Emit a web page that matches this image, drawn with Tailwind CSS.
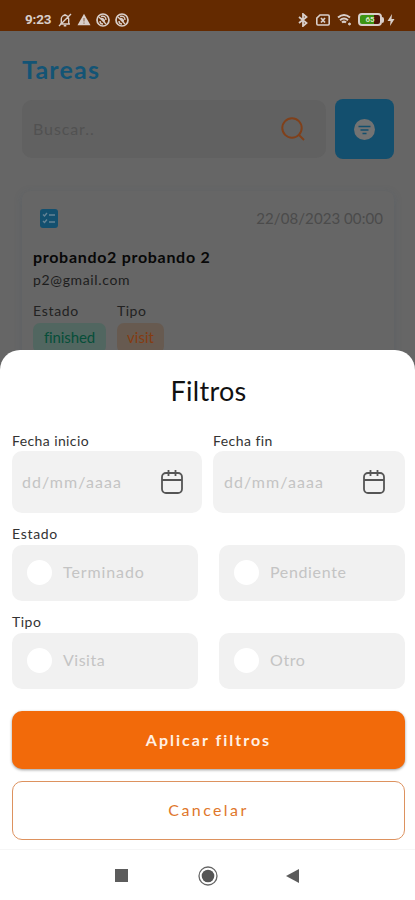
<!DOCTYPE html>
<html lang="es">
<head>
<meta charset="utf-8">
<title>Tareas</title>
<script src="https://cdn.jsdelivr.net/npm/@tailwindcss/browser@4"></script>
</head>
<body class="bg-white">
<div class="relative flex h-[900px] w-[415px] flex-col overflow-hidden bg-[#666] font-['Lato','Noto_Sans',sans-serif] whitespace-nowrap">

  <header class="flex h-[31px] shrink-0 items-center bg-[#642a00] pt-[8px] pr-[20px] pl-[25px] text-[#d9cfca]">
    <span class="w-[33px] font-[Roboto,sans-serif] text-[13.5px] font-bold tracking-[-0.2px]">9:23</span>
    <svg class="h-[14px] w-[14px]" viewBox="0 0 14 14" fill="none" stroke="currentColor" stroke-width="1.4"><path d="M2 11h10M3.3 10.5V6a3.7 3.7 0 0 1 7.4 0v4.5M7 1v1.5M5.7 12.7h2.6M1 13 13 1"/></svg>
    <svg class="ml-[5px] h-[13px] w-[14px]" viewBox="0 0 14 13"><path fill="currentColor" d="M7 .8 13.5 12.3H.5z"/><path stroke="#8f6a50" stroke-width="1.1" d="M7 5v3.5M7 9.5v1.2"/></svg>
    <svg class="ml-[5px] h-[14px] w-[14px]" viewBox="0 0 14 14" fill="none" stroke="currentColor"><circle cx="7" cy="7" r="6" stroke-width="1.7"/><path stroke-width="1.4" d="M3 4l7 7M4 8c0 2 1.5 3 3 3M5 3.5c3-1 5 .5 5 3.5M5.3 5.5c2 0 3 1 3.2 3"/></svg>
    <svg class="ml-[5px] h-[14px] w-[14px]" viewBox="0 0 14 14" fill="none" stroke="currentColor"><circle cx="7" cy="7" r="6" stroke-width="1.7"/><path stroke-width="1.4" d="M3 4l7 7M4 8c0 2 1.5 3 3 3M5 3.5c3-1 5 .5 5 3.500M5.300 5.500c2 0 3 1 3.200 3"/></svg>
    <svg class="ml-auto h-[14px] w-[10px]" viewBox="0 0 10 14" fill="none" stroke="currentColor" stroke-width="1.8"><path d="M1 4l7.500 6L5 13V1l3.500 3L1 10"/></svg>
    <svg class="ml-[8px] h-[12px] w-[14px]" viewBox="0 0 14 12" fill="none" stroke="currentColor" stroke-width="1.600"><path d="M4 1h8q1.200 0 1.200 1.200v7.600q0 1.200-1.200 1.200H2Q.8 11 .8 9.800V4.200z"/><path d="M5 4l4 4.500M9 4 5 8.500" stroke-width="1.700"/></svg>
    <svg class="ml-[7px] h-[13px] w-[15px]" viewBox="0 0 15 13" fill="none" stroke="currentColor" stroke-width="2"><path d="M1 4.500q6-5 12 0M3 7.200q4-3.500 8 0M5 9.500q2-1.800 4 0"/><circle cx="12.500" cy="11" r="1" fill="currentColor" stroke-width="1"/></svg>
    <div class="ml-[6px] flex h-[13px] w-[24px] items-center rounded-[4px] border-2 border-[#d9cfca] bg-[linear-gradient(90deg,#3d9512_68%,#4b1408_68%)]">
      <span class="w-full text-center font-[Roboto,sans-serif] text-[8px] leading-none font-bold text-[#d5e5c5]">65</span>
    </div>
    <span class="h-[6px] w-[2px] rounded-r bg-[#d9cfca]"></span>
    <svg class="ml-[3px] h-[12px] w-[8px]" viewBox="0 0 8 12"><path fill="currentColor" d="M5 0 .5 7H3.500L3 12 7.500 5H4.500z"/></svg>
  </header>

  <main class="flex flex-col pr-[21px] pl-[22px]">
    <h1 class="mt-[22px] h-[32px] text-[25px] leading-[32px] font-bold tracking-[1.2px] text-[#135475]">Tareas</h1>
    <div class="mt-[14px] flex h-[60px] items-center justify-between">
      <div class="flex h-[58px] w-[304px] items-center justify-between rounded-[10px] bg-[#616161] pr-[21px] pl-[11px]">
        <span class="text-[16px] tracking-[0.9px] text-[#515151]">Buscar..</span>
        <svg class="h-[24px] w-[24px]" viewBox="0 0 24 24" fill="none" stroke="#80401a" stroke-width="2"><circle cx="11" cy="11" r="9.700"/><path d="M17.500 17.500l5.500 5.500"/></svg>
      </div>
      <div class="flex h-[60px] w-[59px] items-center justify-center rounded-[8px] bg-[#134f6e]">
        <svg class="h-[21px] w-[21px]" viewBox="0 0 21 21"><circle cx="10.500" cy="10.500" r="10.500" fill="#737373"/><path stroke="#134f6e" stroke-width="1.500" d="M4.500 7.500h12M6.500 11h8M8.500 14.500h4"/></svg>
      </div>
    </div>

    <article class="mt-[32px] flex h-[200px] flex-col rounded-[8px] bg-[#666] px-[11px] shadow-[0_2px_9px_rgba(55,80,105,0.2)]">
      <div class="mt-[15px] flex h-[24px] items-center justify-between pl-[7px]">
        <svg class="h-[19px] w-[18px]" viewBox="0 0 18 19"><rect width="18" height="19" rx="3" fill="#13506f"/><path d="M3 5.500l1.500 1.500 2.500-3M9 6h6M3 12l1.500 1.500 2.500-3M9 13h6" fill="none" stroke="#648395" stroke-width="1.400"/></svg>
        <span class="text-[15px] tracking-[0.07px] text-[#4b4b4b]">22/08/2023 00:00</span>
      </div>
      <h2 class="mt-[16px] h-[22px] text-[16px] leading-[22px] font-bold tracking-[0.7px] text-[#080808]">probando2 probando 2</h2>
      <p class="mt-[2px] h-[20px] text-[14px] leading-[20px] tracking-[0.65px] text-[#1d1d1d]">p2@gmail.com</p>
      <div class="mt-[12px] flex gap-[11px]">
        <div class="flex w-[73px] flex-col">
          <span class="h-[18px] text-[14px] leading-[18px] tracking-[0.7px] text-[#222]">Estado</span>
          <span class="mt-[3px] h-[30px] rounded-[7px] bg-[#516660] text-center text-[15px] leading-[28px] tracking-[-0.1px] text-[#064e39]">finished</span>
        </div>
        <div class="flex w-[47px] flex-col">
          <span class="h-[18px] text-[14px] leading-[18px] tracking-[0.5px] text-[#222]">Tipo</span>
          <span class="mt-[3px] h-[30px] rounded-[7px] bg-[#675a50] text-center text-[15px] leading-[28px] tracking-[0px] text-[#843c12]">visit</span>
        </div>
      </div>
    </article>
  </main>

  <section class="absolute inset-x-0 top-[350px] bottom-0 flex flex-col rounded-t-[20px] bg-white">
    <div class="flex h-[500px] flex-col border-b border-[#f6f6f6] pr-[10px] pl-[12px]">
      <h2 class="mt-[23px] h-[36px] text-center text-[27px] leading-[36px] tracking-[0.3px] text-[#111]">Filtros</h2>
      <div class="mt-[22px] grid grid-cols-[190px_192px] gap-[11px]">
        <div class="flex flex-col">
          <span class="h-[20px] text-[14px] leading-[20px] tracking-[0.4px] text-[#333]">Fecha inicio</span>
          <div class="flex h-[62px] items-center justify-between rounded-[10px] bg-[#f2f2f2] pr-[19px] pl-[10px]">
            <span class="text-[16px] tracking-[1.05px] text-[#c4c4c4]">dd/mm/aaaa</span>
            <svg class="h-[24px] w-[22px]" viewBox="0 0 22 24" fill="none" stroke="#555" stroke-width="1.800"><rect x="1" y="3" width="20" height="20" rx="4"/><path d="M1 10h20M7.500 0v6M14.500 0v6"/></svg>
          </div>
        </div>
        <div class="flex flex-col">
          <span class="h-[20px] text-[14px] leading-[20px] tracking-[0.45px] text-[#333]">Fecha fin</span>
          <div class="flex h-[62px] items-center justify-between rounded-[10px] bg-[#f2f2f2] pr-[20px] pl-[11px]">
            <span class="text-[16px] tracking-[1.05px] text-[#c4c4c4]">dd/mm/aaaa</span>
            <svg class="h-[24px] w-[22px]" viewBox="0 0 22 24" fill="none" stroke="#555" stroke-width="1.800"><rect x="1" y="3" width="20" height="20" rx="4"/><path d="M1 10h20M7.500 0v6M14.500 0v6"/></svg>
          </div>
        </div>
      </div>

      <span class="mt-[11px] h-[21px] text-[14px] leading-[20px] tracking-[0.7px] text-[#333]">Estado</span>
      <div class="grid h-[56px] grid-cols-[186px_186px] gap-[21px] text-[16px] text-[#c4c4c4]">
        <div class="flex items-center gap-[11px] rounded-[10px] bg-[#f1f1f1] pb-[1px] pl-[15px]"><span class="h-[25px] w-[25px] rounded-full bg-white"></span><span class="mt-[-2px] tracking-[0.9px]">Terminado</span></div>
        <div class="flex items-center gap-[11px] rounded-[10px] bg-[#f1f1f1] pb-[1px] pl-[15px]"><span class="h-[25px] w-[25px] rounded-full bg-white"></span><span class="mt-[-2px] tracking-[0.65px]">Pendiente</span></div>
      </div>

      <span class="mt-[11px] h-[21px] text-[14px] leading-[20px] tracking-[0.5px] text-[#333]">Tipo</span>
      <div class="grid h-[56px] grid-cols-[186px_186px] gap-[21px] text-[16px] text-[#c4c4c4]">
        <div class="flex items-center gap-[11px] rounded-[10px] bg-[#f1f1f1] pb-[1px] pl-[15px]"><span class="h-[25px] w-[25px] rounded-full bg-white"></span><span class="mt-[-2px] tracking-[0.5px]">Visita</span></div>
        <div class="flex items-center gap-[11px] rounded-[10px] bg-[#f1f1f1] pb-[1px] pl-[15px]"><span class="h-[25px] w-[25px] rounded-full bg-white"></span><span class="mt-[-2px] tracking-[0.6px]">Otro</span></div>
      </div>

      <button class="mt-[22px] h-[58px] rounded-[10px] bg-[#f26a0a] text-[16px] font-bold tracking-[2px] text-[#fff0e4] shadow-[0_1px_3px_rgba(0,0,0,0.4)]">Aplicar filtros</button>
      <button class="mt-[12px] h-[59px] rounded-[10px] border border-[#dd925f] bg-white pb-[1px] text-[16px] tracking-[2.4px] text-[#df772b]">Cancelar</button>
    </div>
    <nav class="flex h-[50px] items-center pt-[1px] pl-[115px]">
      <svg class="h-[13px] w-[13px]" viewBox="0 0 13 13"><path fill="#5c5c5c" d="M0 0h13v13H0z"/></svg>
      <svg class="ml-[70px] h-[20px] w-[20px]" viewBox="0 0 20 20"><circle cx="10" cy="10" r="9" fill="none" stroke="#666" stroke-width="1.300"/><circle cx="10" cy="10" r="6.300" fill="#555"/></svg>
      <svg class="ml-[68px] h-[14px] w-[13px]" viewBox="0 0 13 14"><path fill="#5c5c5c" d="M13 0v14L0 7z"/></svg>
    </nav>
  </section>
</div>
</body>
</html>
